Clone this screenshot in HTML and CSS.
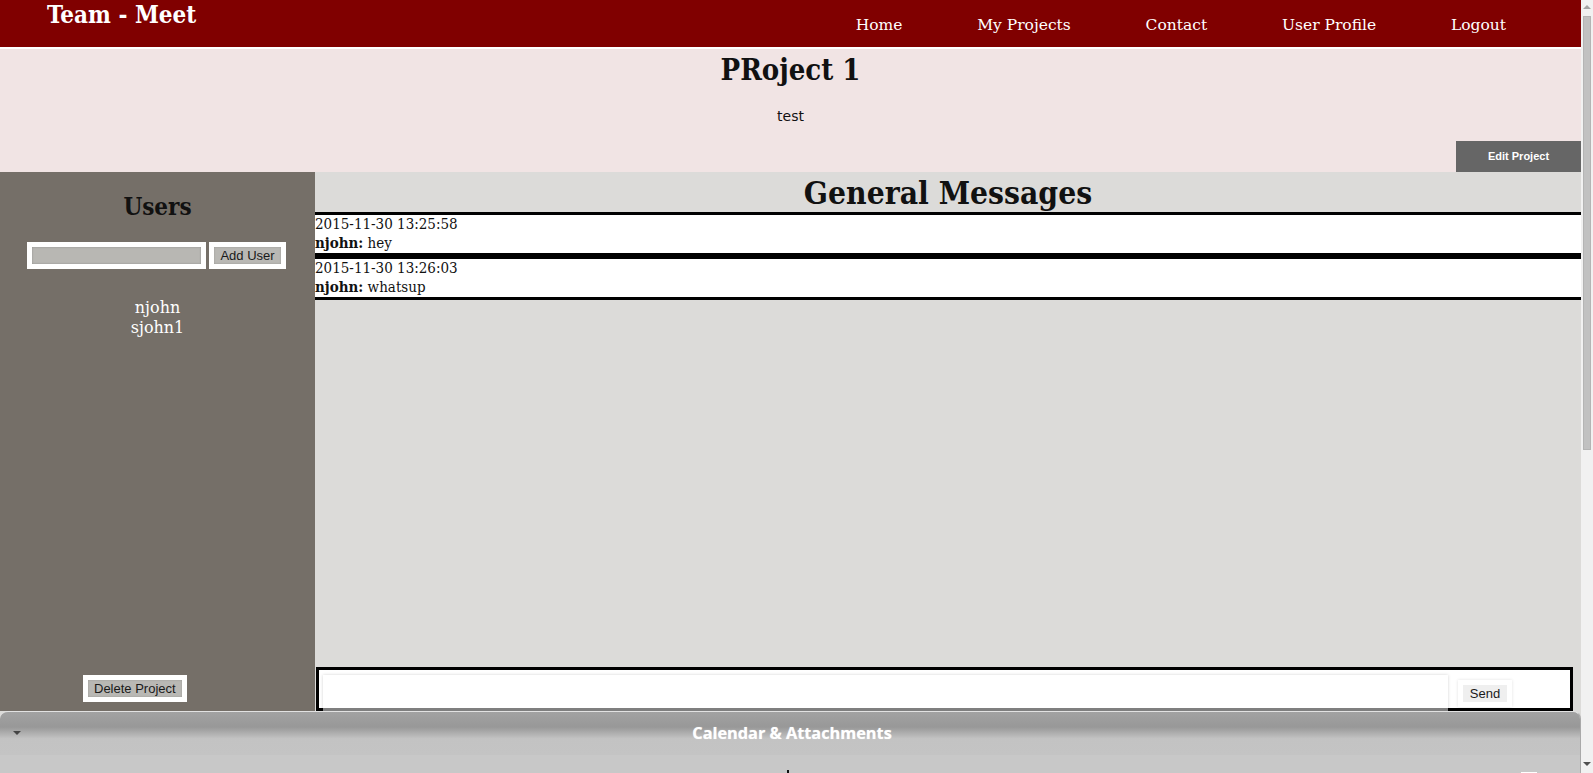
FILE: index.html
```html
<!DOCTYPE html>
<html lang="en">
<head>
<meta charset="utf-8">
<title>Team - Meet | PRoject 1</title>
<link rel="stylesheet" href="styles.css">
</head>
<body>
<div class="viewport">
  <div class="page">
    <header class="topbar">
      <div class="brand">Team - Meet</div>
      <nav class="nav">
        <a href="#">Home</a>
        <a href="#">My Projects</a>
        <a href="#">Contact</a>
        <a href="#">User Profile</a>
        <a href="#">Logout</a>
      </nav>
    </header>

    <section class="banner">
      <h1 class="project-title">PRoject 1</h1>
      <p class="project-desc">test</p>
      <div class="banner-actions">
        <button class="edit-btn" type="button">Edit Project</button>
      </div>
    </section>

    <div class="workspace">
      <aside class="sidebar">
        <h2 class="side-title">Users</h2>
        <form class="add-user">
          <input class="user-field" type="text">
          <button class="grey-btn" type="button">Add User</button>
        </form>
        <ul class="user-list">
          <li>njohn</li>
          <li>sjohn1</li>
        </ul>
        <div class="delete-row">
          <button class="grey-btn" type="button">Delete Project</button>
        </div>
      </aside>

      <main class="messages">
        <h2 class="msg-title">General Messages</h2>
        <div class="msg">
          <div class="msg-time">2015-11-30 13:25:58</div>
          <div class="msg-body"><b>njohn:</b> hey</div>
        </div>
        <div class="msg">
          <div class="msg-time">2015-11-30 13:26:03</div>
          <div class="msg-body"><b>njohn:</b> whatsup</div>
        </div>
        <div class="composer">
          <textarea class="composer-text"></textarea>
          <button class="send-btn" type="button">Send</button>
        </div>
      </main>
    </div>

    <div class="accordion">
      <div class="acc-header">
        <span class="acc-arrow"></span>
        <span class="acc-title">Calendar &amp; Attachments</span>
      </div>
      <div class="acc-content">
        <span class="acc-mark"></span>
        <span class="acc-chip"></span>
      </div>
    </div>
  </div>

  <div class="scrollbar">
    <span class="sb-up"></span>
    <span class="sb-thumb"></span>
    <span class="sb-space"></span>
    <span class="sb-down"></span>
  </div>
</div>
</body>
</html>
```

FILE: styles.css
```css
* { box-sizing: border-box; }

html, body {
  margin: 0;
  padding: 0;
  height: 100%;
}

body {
  font-family: "DejaVu Serif", serif;
  color: #111;
  background: #dcdbd9;
}

.viewport {
  display: flex;
  height: 100vh;
  overflow: hidden;
}

.page {
  flex: 1;
  min-width: 0;
  display: flex;
  flex-direction: column;
  overflow: hidden;
}

/* ---------- top bar ---------- */
.topbar {
  flex: 0 0 49px;
  display: flex;
  align-items: flex-start;
  background: #800000;
  border-bottom: 2px solid #ffffff;
}

.brand {
  padding: 1px 0 0 47px;
  font-family: "DejaVu Serif Condensed", "DejaVu Serif", serif;
  font-stretch: condensed;
  font-weight: bold;
  font-size: 24px;
  line-height: 28px;
  color: #fff;
}

.nav {
  margin-left: auto;
  display: flex;
  gap: 74.8px;
  padding: 15px 75px 0 0;
}

.nav a {
  color: #fff;
  text-decoration: none;
  font-family: "DejaVu Serif", serif;
  font-size: 15.5px;
  line-height: 20px;
}

/* ---------- banner ---------- */
.banner {
  flex: 0 0 123px;
  display: flex;
  flex-direction: column;
  align-items: center;
  background: #f1e4e4;
}

.project-title {
  margin: 3px 0 0;
  font-family: "DejaVu Serif Condensed", "DejaVu Serif", serif;
  font-stretch: condensed;
  font-weight: bold;
  font-size: 29px;
  line-height: 36px;
  color: #111;
}

.project-desc {
  margin: 20px 0 0;
  font-family: "DejaVu Sans", sans-serif;
  font-size: 14px;
  line-height: 17px;
  color: #111;
}

.banner-actions {
  align-self: stretch;
  margin-top: auto;
  display: flex;
  justify-content: flex-end;
}

.edit-btn {
  width: 125px;
  height: 31px;
  border: 0;
  padding: 0 0 2px;
  background: #666666;
  color: #fff;
  font-family: "Liberation Sans", Arial, sans-serif;
  font-weight: bold;
  font-size: 11px;
}

/* ---------- workspace ---------- */
.workspace {
  flex: 1;
  min-height: 0;
  display: flex;
  overflow: hidden;
}

.sidebar {
  flex: 0 0 315px;
  display: flex;
  flex-direction: column;
  align-items: center;
  background: #756f68;
  padding-top: 21px;
}

.side-title {
  margin: 0;
  font-family: "DejaVu Serif Condensed", "DejaVu Serif", serif;
  font-stretch: condensed;
  font-weight: bold;
  font-size: 24px;
  line-height: 28px;
  color: #111;
}

.add-user {
  margin: 21px 0 0;
  display: flex;
  gap: 3px;
  padding-right: 2px;
}

.user-field {
  width: 179px;
  height: 27px;
  margin: 0;
  border: 5px solid #ffffff;
  background: #b8b7b3;
  box-shadow: inset 0 0 2px rgba(0, 0, 0, 0.25);
  padding: 0;
}

.grey-btn {
  height: 27px;
  margin: 0;
  border: 5px solid #ffffff;
  padding: 0 6px;
  background: #b9b8b4;
  box-shadow: inset 0 0 2px rgba(0, 0, 0, 0.2);
  font-family: "Liberation Sans", Arial, sans-serif;
  font-size: 13px;
  line-height: 15px;
  color: #1a1a1a;
}

.user-list {
  list-style: none;
  margin: 29px 0 0;
  padding: 0;
  text-align: center;
  font-family: "DejaVu Serif", serif;
  font-size: 16px;
  line-height: 20px;
  color: #fff;
}

.delete-row {
  align-self: stretch;
  margin-top: auto;
  padding: 0 0 9px 83px;
  display: flex;
}

.delete-row .grey-btn {
  padding: 0 6px;
}

/* ---------- messages ---------- */
.messages {
  flex: 1;
  min-width: 0;
  display: flex;
  flex-direction: column;
  background: #dcdbd9;
}

.msg-title {
  margin: 0;
  height: 40px;
  text-align: center;
  font-family: "DejaVu Serif Condensed", "DejaVu Serif", serif;
  font-stretch: condensed;
  font-weight: bold;
  font-size: 31.5px;
  line-height: 42px;
  color: #111;
}

.msg {
  background: #fff;
  border-top: 3px solid #000;
  border-bottom: 3px solid #000;
  font-family: "DejaVu Serif Condensed", "DejaVu Serif", serif;
  font-stretch: condensed;
  font-size: 15px;
  line-height: 19px;
  color: #111;
}

.msg b { font-weight: bold; }

.composer {
  margin: auto 8px 0 1px;
  height: 44px;
  display: flex;
  align-items: flex-start;
  gap: 10px;
  background: #fff;
  border: 3px solid #000;
  padding: 5px 0 0 4px;
}

.composer-text {
  flex: 0 0 90.2%;
  height: 36px;
  margin: 0;
  padding: 0;
  resize: none;
  border: 0;
  border-bottom: 3px solid #7f7f7f;
  background: #fff;
  box-shadow: 0 0 3px rgba(0, 0, 0, 0.18);
}

.send-btn {
  margin-top: 5px;
  height: 27px;
  border: 5px solid #fff;
  padding: 0 7px;
  background: #efefef;
  box-shadow: 0 0 3px rgba(0, 0, 0, 0.12);
  font-family: "Liberation Sans", Arial, sans-serif;
  font-size: 13px;
  line-height: 15px;
  color: #1a1a1a;
}

/* ---------- accordion ---------- */
.accordion {
  flex: 0 0 62px;
  display: flex;
  flex-direction: column;
  border-top: 1px solid #e2e2e2;
  border-right: 1px solid #a9a9a9;
  border-radius: 8px 8px 0 0;
  overflow: hidden;
  background: #c8c8c8;
}

.acc-header {
  flex: 0 0 43px;
  display: flex;
  align-items: center;
  justify-content: center;
  padding: 0 0 2px;
  background: linear-gradient(#a2a2a2 0%, #989898 35%, #c3c3c3 62%, #c4c4c4 100%);
}

.acc-arrow {
  margin-right: auto;
  margin-left: 13px;
  width: 0;
  height: 0;
  border-left: 4px solid transparent;
  border-right: 4px solid transparent;
  border-top: 4px solid #454545;
}

.acc-title {
  margin-right: auto;
  margin-left: -17px;
  font-family: "Open Sans", Lato, sans-serif;
  font-weight: bold;
  font-size: 16.3px;
  line-height: 20px;
  color: #fff;
  text-shadow: 0 0 1px rgba(255, 255, 255, 0.6);
}

.acc-content {
  flex: 1;
  display: flex;
  align-items: flex-start;
  padding: 15px 43px 0 787px;
}

.acc-mark {
  width: 2px;
  height: 4px;
  background: #111;
}

.acc-chip {
  margin-left: auto;
  margin-top: 2px;
  width: 16px;
  height: 2px;
  background: #fff;
}

/* ---------- fake scrollbar ---------- */
.scrollbar {
  flex: 0 0 12px;
  display: flex;
  flex-direction: column;
  align-items: center;
  background: #f1f1f1;
}

.sb-up {
  margin-top: 5px;
  width: 0;
  height: 0;
  border-left: 4px solid transparent;
  border-right: 4px solid transparent;
  border-bottom: 4px solid #a3a3a3;
}

.sb-thumb {
  margin-top: 7px;
  width: 8px;
  height: 434px;
  background: #c1c1c1;
  border: 1px solid #b4b4b4;
}

.sb-space { flex: 1; }

.sb-down {
  margin-bottom: 7px;
  width: 0;
  height: 0;
  border-left: 4px solid transparent;
  border-right: 4px solid transparent;
  border-top: 4px solid #505050;
}
```
